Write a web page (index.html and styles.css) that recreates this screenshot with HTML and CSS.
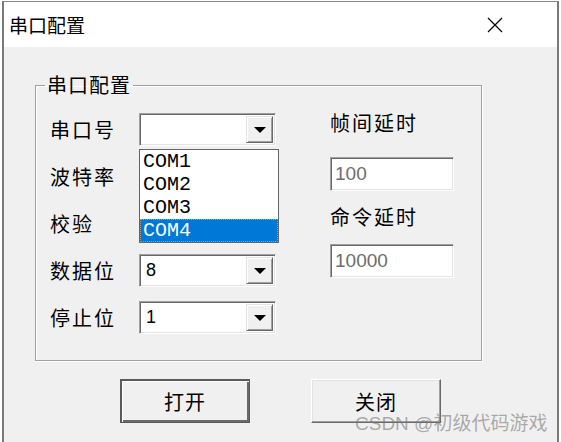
FILE: index.html
```html
<!DOCTYPE html>
<html lang="zh-CN">
<head>
    <meta charset="UTF-8">
    <title>串口配置</title>
    <link rel="stylesheet" href="styles.css">
</head>
<body>
    <div class="window">
        <div class="titlebar">
            <span class="title">串口配置</span>
            <svg class="close" width="16" height="16" viewBox="0 0 16 16">
                <path d="M1 1 L15 15 M15 1 L1 15" stroke="#000" stroke-width="1.2" fill="none"/>
            </svg>
        </div>

        <div class="content">
            <fieldset class="group">
                <legend>串口配置</legend>
                <div class="group-body">
                    <div class="col-left">
                        <div class="row">
                            <span class="label">串口号</span>
                            <div class="combo">
                                <span class="combo-value"></span>
                                <span class="combo-btn"><i class="arrow"></i></span>
                                <!-- opened list of the first combo -->
                                <ul class="droplist">
                                    <li>COM1</li>
                                    <li>COM2</li>
                                    <li>COM3</li>
                                    <li class="selected">COM4</li>
                                </ul>
                            </div>
                        </div>
                        <div class="row">
                            <span class="label">波特率</span>
                            <div class="combo">
                                <span class="combo-value"></span>
                                <span class="combo-btn"><i class="arrow"></i></span>
                            </div>
                        </div>
                        <div class="row">
                            <span class="label">校验</span>
                            <div class="combo">
                                <span class="combo-value"></span>
                                <span class="combo-btn"><i class="arrow"></i></span>
                            </div>
                        </div>
                        <div class="row">
                            <span class="label">数据位</span>
                            <div class="combo">
                                <span class="combo-value">8</span>
                                <span class="combo-btn"><i class="arrow"></i></span>
                            </div>
                        </div>
                        <div class="row">
                            <span class="label">停止位</span>
                            <div class="combo">
                                <span class="combo-value">1</span>
                                <span class="combo-btn"><i class="arrow"></i></span>
                            </div>
                        </div>
                    </div>

                    <div class="col-right">
                        <span class="label label-first">帧间延时</span>
                        <div class="textbox">100</div>
                        <span class="label label-second">命令延时</span>
                        <div class="textbox">10000</div>
                    </div>
                </div>
            </fieldset>

            <div class="buttons">
                <button class="btn btn-default">打开</button>
                <button class="btn">关闭</button>
            </div>
        </div>
    </div>

    <div class="watermark">CSDN @初级代码游戏</div>
</body>
</html>
```

FILE: styles.css
```css
body {
    margin: 0;
    background-color: #ffffff;
    font-family: "Noto Sans CJK SC", sans-serif;
    height: 442px;
    overflow: hidden;
    position: relative;
}

.window {
    margin: 1px 2px 0 2px;
    border-top: 1px solid #8a8a8a;
    border-left: 2px solid #7a7a7a;
    border-right: 2px solid #7a7a7a;
    background-color: #f0f0f0;
    height: 460px;
}

.titlebar {
    background-color: #ffffff;
    height: 45px;
    display: flex;
    align-items: center;
    justify-content: space-between;
    padding: 0 54px 0 5px;
}

.title {
    font-size: 19px;
    line-height: 24px;
    color: #000;
}

.close {
    display: block;
}

.content {
    padding: 26px 0 0 31px;
}

.group {
    margin: 0;
    width: 447px;
    box-sizing: border-box;
    padding: 16px 14px 26px 14px;
    border: 1px solid #a0a0a0;
    box-shadow: 1px 1px 0 #ffffff, inset 1px 1px 0 #ffffff;
}

.group legend {
    font-size: 20px;
    line-height: 24px;
    padding: 0 2px;
    margin-left: -5px;
    letter-spacing: 1px;
    color: #000;
}

.group-body {
    display: flex;
    gap: 54px;
}

.col-left {
    display: flex;
    flex-direction: column;
    gap: 14px;
}

.row {
    display: flex;
    align-items: center;
}

.label {
    font-size: 20px;
    line-height: 24px;
    letter-spacing: 2px;
    color: #000;
}

.row .label {
    width: 89px;
}

.combo {
    position: relative;
    width: 137px;
    height: 33px;
    box-sizing: border-box;
    border: 1px solid;
    border-color: #a0a0a0 #ffffff #ffffff #a0a0a0;
    box-shadow: inset 1px 1px 0 #696969, inset -1px -1px 0 #e3e3e3;
    background-color: #ffffff;
    padding: 2px;
    display: flex;
}

.combo-value {
    flex: 1;
    font-family: "Liberation Sans", sans-serif;
    font-size: 18px;
    line-height: 27px;
    padding-left: 4px;
    color: #000;
}

.combo-btn {
    width: 27px;
    box-sizing: border-box;
    background-color: #f0f0f0;
    border: 1px solid;
    border-color: #e3e3e3 #696969 #696969 #e3e3e3;
    box-shadow: inset 1px 1px 0 #ffffff, inset -1px -1px 0 #a0a0a0;
    display: flex;
    align-items: center;
    justify-content: center;
}

.arrow {
    display: block;
    width: 0;
    height: 0;
    border-left: 6px solid transparent;
    border-right: 6px solid transparent;
    border-top: 6px solid #000;
    margin-top: 1px;
}

/* the open list hangs over the rows below */
.droplist {
    position: absolute;
    left: -1px;
    top: 35px;
    width: 138px;
    margin: 0;
    padding: 0;
    list-style: none;
    background-color: #ffffff;
    border: 1px solid #646464;
    z-index: 10;
}

.droplist li {
    height: 23px;
    line-height: 23px;
    padding-left: 3px;
    font-family: "Liberation Mono", monospace;
    font-size: 20px;
    color: #000;
    box-sizing: border-box;
}

.droplist li.selected {
    background-color: #0078d7;
    color: #ffffff;
    border: 1px dotted #f08a24;
    padding-left: 2px;
    line-height: 21px;
}

.col-right {
    display: flex;
    flex-direction: column;
}

.label-first {
    margin-top: -2px;
}

.label-second {
    margin-top: 14px;
}

.textbox {
    width: 124px;
    height: 34px;
    box-sizing: border-box;
    border: 1px solid;
    border-color: #a0a0a0 #ffffff #ffffff #a0a0a0;
    box-shadow: inset 1px 1px 0 #696969, inset -1px -1px 0 #e3e3e3;
    background-color: #ffffff;
    font-family: "Liberation Sans", sans-serif;
    font-size: 19px;
    line-height: 32px;
    padding-left: 4px;
    color: #6d6d6d;
    margin-top: 22px;
}

.label-second + .textbox {
    margin-top: 15px;
}

.buttons {
    display: flex;
    gap: 61px;
    margin: 18px 0 0 85px;
}

.btn {
    width: 130px;
    height: 44px;
    box-sizing: border-box;
    background-color: #f0f0f0;
    font-family: "Noto Sans CJK SC", sans-serif;
    font-size: 20px;
    letter-spacing: 1px;
    color: #000;
    padding: 0;
    border: 1px solid;
    border-color: #ffffff #696969 #696969 #ffffff;
    box-shadow: inset -1px -1px 0 #a0a0a0, inset 1px 1px 0 #e3e3e3;
}

.btn-default {
    border: 1px solid #5a5a5a;
    box-shadow: inset 1px 1px 0 #5a5a5a, inset 2px 2px 0 #ffffff, inset -2px -2px 0 #6a6a6a;
}

.watermark {
    position: absolute;
    left: 355px;
    top: 408px;
    font-family: "Liberation Sans", "Noto Sans CJK SC", sans-serif;
    font-size: 19px;
    color: rgba(120, 120, 120, 0.6);
    white-space: nowrap;
}
```
